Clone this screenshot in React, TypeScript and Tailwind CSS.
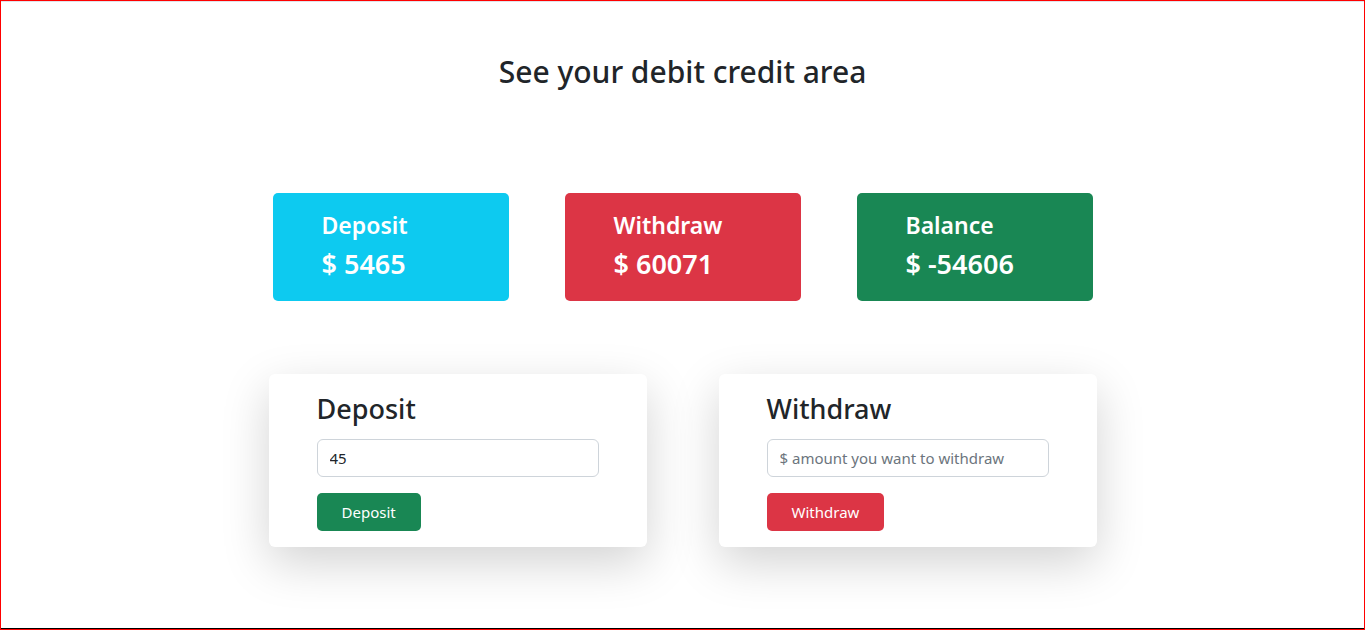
import React from "react";

const font = { fontFamily: '"Noto Sans", "Open Sans", sans-serif' };

function StatCard({ label, amount, color }: { label: string; amount: string; color: string }) {
  return (
    <div className={`w-[236px] h-[108px] rounded-[5px] ${color} text-white pt-[19px] pl-[49px]`}>
      <div className="text-[23px] font-semibold leading-[1.2] mb-[8px]">{label}</div>
      <div className="text-[27px] font-semibold leading-[1.2]">{amount}</div>
    </div>
  );
}

function FormCard({
  title,
  value,
  placeholder,
  button,
  btnColor,
}: {
  title: string;
  value?: string;
  placeholder?: string;
  button: string;
  btnColor: string;
}) {
  return (
    <div className="w-[378px] bg-white rounded-[6px] shadow-[0_16px_48px_rgba(0,0,0,0.175)] pt-[19px] pb-[16px] pl-[48px]">
      <h3 className="text-[27px] font-medium leading-[1.2] text-[#212529] mb-[14px]">{title}</h3>
      <input
        className="block w-[282px] h-[38px] border border-[#ced4da] rounded-[6px] px-[12px] text-[15px] text-[#212529] placeholder:text-[#6c757d] outline-none"
        defaultValue={value}
        placeholder={placeholder}
        style={font}
      />
      <button
        className={`mt-[16px] h-[38px] px-[25px] rounded-[5px] text-white text-[15px] ${btnColor}`}
        style={font}
      >
        {button}
      </button>
    </div>
  );
}

export default function App() {
  return (
    <div className="w-[1366px] h-[630px] bg-white overflow-hidden" style={font}>
      <div className="w-[1365px] h-[630px] flex flex-col border-l border-r border-t border-[#ff0000]">
        <div className="h-px bg-[#dfe3ea]" />
        <div className="flex-1 flex flex-col items-center">
          <h2 className="mt-[52px] text-[30px] font-medium leading-[1.2] text-[#212529]">See your debit credit area</h2>
          <div className="mt-[103px] flex gap-[56px]">
            <StatCard label="Deposit" amount="$ 5465" color="bg-[#0dcaf0]" />
            <StatCard label="Withdraw" amount="$ 60071" color="bg-[#dc3545]" />
            <StatCard label="Balance" amount="$ -54606" color="bg-[#198754]" />
          </div>
          <div className="mt-[73px] flex gap-[72px]">
            <FormCard title="Deposit" value="45" button="Deposit" btnColor="bg-[#198754]" />
            <FormCard title="Withdraw" placeholder="$ amount you want to withdraw" button="Withdraw" btnColor="bg-[#dc3545]" />
          </div>
        </div>
        <div className="h-px bg-black" />
        <div className="h-px bg-[#ff0000]" />
      </div>
    </div>
  );
}
